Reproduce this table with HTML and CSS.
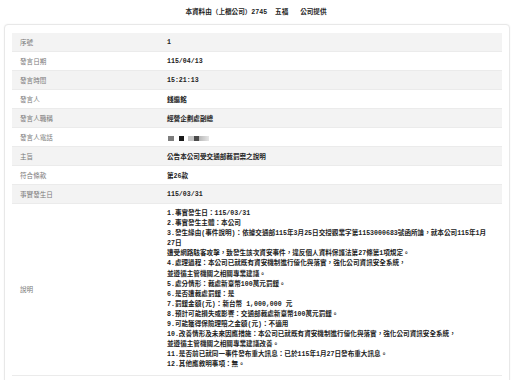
FILE: index.html
```html
<!DOCTYPE html>
<html lang="zh-Hant">
<head>
<meta charset="utf-8">
<title>重大訊息</title>
<link rel="stylesheet" href="styles.css">
</head>
<body>
<div class="title">本資料由（上櫃公司）2745&nbsp;&nbsp;五福&nbsp;&nbsp;&nbsp;公司提供</div>
<div class="card">
  <div class="table">
    <div class="row alt"><div class="label">序號</div><div class="value">1</div></div>
    <div class="row"><div class="label">發言日期</div><div class="value">115/04/13</div></div>
    <div class="row alt"><div class="label">發言時間</div><div class="value">15:21:13</div></div>
    <div class="row"><div class="label">發言人</div><div class="value">錢繼銘</div></div>
    <div class="row alt"><div class="label">發言人職稱</div><div class="value">經營企劃處副總</div></div>
    <div class="row"><div class="label">發言人電話</div><div class="value"><span class="mask"><i class="m1"></i><i class="m2"></i><i class="m3"></i><i class="m4"></i><i class="m5"></i></span></div></div>
    <div class="row alt"><div class="label">主旨</div><div class="value">公告本公司受交通部裁罰案之說明</div></div>
    <div class="row"><div class="label">符合條款</div><div class="value">第26款</div></div>
    <div class="row alt"><div class="label">事實發生日</div><div class="value">115/03/31</div></div>
    <div class="row desc"><div class="label">說明</div>
      <div class="value lines">
        <div>1.事實發生日：115/03/31</div>
        <div>2.事實發生主體：本公司</div>
        <div>3.發生緣由(事件說明)：依據交通部115年3月25日交授觀業字第1153000683號函所論，就本公司115年1月</div>
        <div>27日</div>
        <div>遭受網路駭客攻擊，致發生該次資安事件，違反個人資料保護法第27條第1項規定。</div>
        <div>4.處理過程：本公司已就既有資安機制進行優化與落實，強化公司資訊安全系統，</div>
        <div>並遵循主管機關之相關專業建議。</div>
        <div>5.處分情形：裁處新臺幣100萬元罰鍰。</div>
        <div>6.是否遭裁處罰鍰：是</div>
        <div>7.罰鍰金額(元)：新台幣&nbsp;1,000,000&nbsp;元</div>
        <div>8.預計可能損失或影響：交通部裁處新臺幣100萬元罰鍰。</div>
        <div>9.可能獲得保險理賠之金額(元)：不適用</div>
        <div>10.改善情形及未來因應措施：本公司已就既有資安機制進行優化與落實，強化公司資訊安全系統，</div>
        <div>並遵循主管機關之相關專業建議改善。</div>
        <div>11.是否前已就同一事件發布重大訊息：已於115年1月27日發布重大訊息。</div>
        <div>12.其他應敘明事項：無。</div>
      </div>
    </div>
  </div>
</div>
</body>
</html>
```
FILE: styles.css
```css
html, body {
  margin: 0;
  padding: 0;
  background: #ffffff;
}
body {
  font-family: "Liberation Mono", "Noto Sans CJK TC", monospace;
  font-size: 6.6px;
  color: #222222;
}
.title {
  text-align: center;
  font-weight: bold;
  line-height: 10px;
  padding: 8px 0 6px;
  color: #1e1e1e;
}
.card {
  margin: 0 2px 0 4px;
  border: 1px solid #e8e8e8;
  border-radius: 4px;
  padding: 8px 7px;
  box-shadow: 0 0 2px rgba(0, 0, 0, 0.06);
  background: #ffffff;
}
.table {
  display: flex;
  flex-direction: column;
}
.row {
  display: grid;
  grid-template-columns: 147px 1fr;
  align-items: center;
  height: 18px;
  border-bottom: 1px solid #ebebeb;
}
.row.alt {
  background: #f3f3f3;
}
.label {
  padding: 0 8px;
  color: #7a7a7a;
}
.value {
  padding: 0 8px;
  font-weight: bold;
  color: #222222;
  white-space: nowrap;
}
.row.desc {
  height: auto;
}
.lines {
  line-height: 10.1px;
  padding-top: 5px;
  padding-bottom: 4px;
}
.mask {
  display: flex;
  align-items: center;
  height: 5px;
  margin-top: 2px;
  margin-left: 1px;
}
.mask i {
  display: block;
  height: 5px;
}
.m1 { width: 6px; background: #7d7d7d; margin-right: 5px; }
.m2 { width: 5px; background: #1a1a1a; margin-right: 4px; }
.m3 { width: 6px; background: #c4c4c4; }
.m4 { width: 5px; background: #4a4a4a; }
.m5 { width: 10px; background: linear-gradient(90deg, #b8b8b8, #e6e6e6); }
```
